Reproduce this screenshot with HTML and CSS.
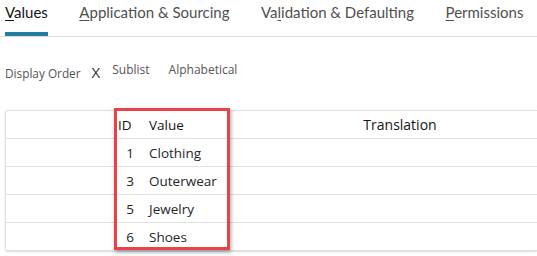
FILE: index.html
```html
<!DOCTYPE html>
<html>
<head>
<meta charset="utf-8">
<link rel="stylesheet" href="styles.css">
</head>
<body>
<div class="tabs">
  <div class="tab active"><u>V</u>alues</div>
  <div class="tab"><u>A</u>pplication &amp; Sourcing</div>
  <div class="tab">Va<u>l</u>idation &amp; Defaulting</div>
  <div class="tab"><u>P</u>ermissions</div>
</div>
<div class="toolbar">
  <span class="label">Display Order</span>
  <span class="x">X</span>
  <span class="opt">Sublist</span>
  <span class="opt">Alphabetical</span>
</div>
<div class="tablewrap">
  <div class="row head">
    <div class="c0"></div>
    <div class="cid">ID</div>
    <div class="cval">Value</div>
    <div class="ctr">Translation</div>
  </div>
  <div class="row"><div class="c0"></div><div class="cid">1</div><div class="cval">Clothing</div><div class="ctr"></div></div>
  <div class="row"><div class="c0"></div><div class="cid">3</div><div class="cval">Outerwear</div><div class="ctr"></div></div>
  <div class="row"><div class="c0"></div><div class="cid">5</div><div class="cval">Jewelry</div><div class="ctr"></div></div>
  <div class="row"><div class="c0"></div><div class="cid">6</div><div class="cval">Shoes</div><div class="ctr"></div></div>
  <div class="highlight"></div>
</div>
</body>
</html>
```
FILE: styles.css
```css
html, body { margin: 0; padding: 0; background: #fff; }
body { width: 537px; height: 256px; overflow: hidden; font-family: Lato, "Open Sans", sans-serif; }
.tabs {
  display: flex;
  border-bottom: 1px solid #dedede;
  padding-left: 5px;
  height: 37px;
  box-sizing: border-box;
}
.tab {
  font-size: 15px;
  color: #4f4f4f;
  padding-top: 3px;
  margin-right: 31.5px;
  height: 33px;
  box-sizing: border-box;
  white-space: nowrap;
}
.tab u { text-decoration-thickness: 1px; text-underline-offset: 2px; }
.tab.active { color: #161513; border-bottom: 4px solid #227e9e; height: 36px; }
.toolbar {
  display: flex;
  align-items: flex-start;
  padding: 21px 0 0 5px;
  height: 73px;
  box-sizing: border-box;
  font-family: "Open Sans", sans-serif;
  color: #555;
}
.label { font-size: 11.8px; margin-top: 7px; }
.x { font-size: 15px; margin: 4px 0 0 11px; color: #333; }
.opt { font-size: 12px; margin: 3px 0 0 12px; }
.opt + .opt { margin-left: 19px; }
.tablewrap {
  position: relative;
  margin-left: 5px;
  border-left: 1px solid #e0e0e0;
  border-top: 1px solid #e0e0e0;
  border-radius: 3px 0 0 3px;
  box-shadow: 0 1px 2px rgba(0,0,0,0.15);
  font-family: "Open Sans", sans-serif;
  font-size: 13.5px;
  color: #252525;
}
.row {
  display: flex;
  height: 28px;
  align-items: center;
  border-bottom: 1px solid #e0e0e0;
  box-sizing: border-box;
}
.row:last-of-type { border-bottom: 2px solid #dcdcdc; }
.c0 { width: 112px; }
.cid { width: 16px; text-align: right; }
.head .cid { text-align: left; }
.cval { width: 100px; padding-left: 15px; }
.ctr { flex: 1; text-align: center; padding-left: 14px; }
.head { color: #161513; }
.head .ctr { font-size: 14px; }
.highlight {
  position: absolute;
  left: 108px;
  top: -3px;
  width: 116px;
  height: 142px;
  border: 3px solid #e8434a;
  box-sizing: border-box;
  box-shadow: 1px 2px 4px rgba(0,0,0,0.35);
}
```
